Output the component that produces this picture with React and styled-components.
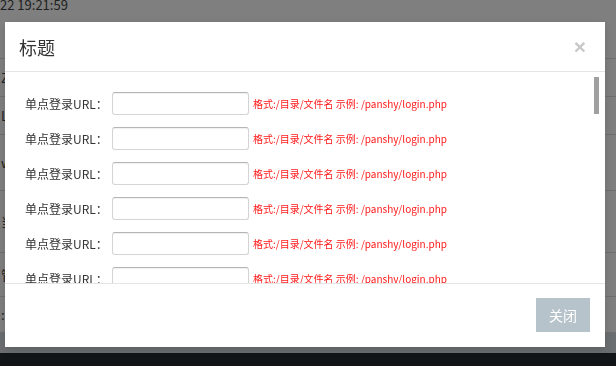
import React from "react";
import styled, { createGlobalStyle } from "styled-components";

const GlobalStyle = createGlobalStyle`
  html, body {
    margin: 0;
    padding: 0;
  }
  body {
    background: #fff;
    height: 366px;
    overflow: hidden;
    font-family: "Noto Sans CJK SC", "Liberation Sans", sans-serif;
  }
  * {
    box-sizing: border-box;
  }
`;

const bgRows = [
  { h: 59, text: "22 19:21:59", top: true },
  { h: 38, text: "Z" },
  { h: 38, text: "L." },
  { h: 56, text: "w" },
  { h: 62, text: "当" },
  { h: 44, text: "管" },
  { h: 36, text: ":" },
];

const rows = [1, 2, 3, 4, 5, 6, 7, 8];

const App = () => {
  return (
    <>
      <GlobalStyle />
      <Page>
        <Table>
          {bgRows.map((r, i) => (
            <BgRow key={i} $h={r.h} $top={r.top}>
              <BgCell $top={r.top}>{r.text}</BgCell>
            </BgRow>
          ))}
        </Table>
        <Band />
        <DarkFooter />
      </Page>

      <Overlay>
        <Modal>
          <Header>
            <Title>标题</Title>
            <Close>×</Close>
          </Header>
          <Body>
            {rows.map((n) => (
              <FormRow key={n}>
                <Label>单点登录URL：</Label>
                <Input type="text" />
                <Hint>格式:/目录/文件名 示例: /panshy/login.php</Hint>
              </FormRow>
            ))}
            <Thumb />
          </Body>
          <Footer>
            <Button>关闭</Button>
          </Footer>
        </Modal>
      </Overlay>
    </>
  );
};

const Page = styled.div`
  display: flex;
  flex-direction: column;
  height: 366px;
`;

const Table = styled.div`
  display: flex;
  flex-direction: column;
`;

const BgRow = styled.div`
  height: ${(p) => p.$h}px;
  border-bottom: 1px solid #dedede;
  display: flex;
  align-items: ${(p) => (p.$top ? "flex-start" : "center")};
`;

const BgCell = styled.div`
  font-size: 13px;
  color: #444;
  margin-top: ${(p) => (p.$top ? "-5px" : "0")};
  padding-left: ${(p) => (p.$top ? "0" : "1px")};
`;

const Band = styled.div`
  height: 20px;
  background: #d7dde1;
`;

const DarkFooter = styled.div`
  flex: 1;
  background: #242a30;
`;

const Overlay = styled.div`
  position: fixed;
  inset: 0;
  background: rgba(0, 0, 0, 0.5);
  padding: 22px 0 0 5px;
`;

const Modal = styled.div`
  width: 600px;
  background: #fff;
  display: flex;
  flex-direction: column;
  box-shadow: 0 3px 9px rgba(0, 0, 0, 0.15);
`;

const Header = styled.div`
  height: 50px;
  padding: 0 19px 0 14px;
  display: flex;
  align-items: center;
  justify-content: space-between;
  border-bottom: 1px solid #e5e5e5;
`;

const Title = styled.h4`
  margin: 0;
  font-size: 18px;
  font-weight: normal;
  color: #333;
`;

const Close = styled.span`
  font-family: "Liberation Sans", sans-serif;
  font-size: 21px;
  font-weight: bold;
  color: #c8c8c8;
  line-height: 1;
`;

const Body = styled.div`
  position: relative;
  height: 211px;
  overflow: hidden;
  padding: 14px 0 0 20px;
`;

const FormRow = styled.div`
  height: 35px;
  display: flex;
  align-items: center;
`;

const Label = styled.label`
  width: 87px;
  font-size: 12px;
  color: #333;
`;

const Input = styled.input`
  width: 137px;
  height: 23px;
  margin: 0 4px 0 0;
  border: 1px solid #d4d4d4;
  border-top-color: #b5b5b5;
  border-radius: 3px;
  box-shadow: inset 0 1px 1px rgba(0, 0, 0, 0.06);
  outline: none;
`;

const Hint = styled.span`
  font-size: 10px;
  color: #ff1a1a;
`;

const Thumb = styled.div`
  position: absolute;
  top: 5px;
  right: 6px;
  width: 5px;
  height: 37px;
  background: #a0a0a0;
`;

const Footer = styled.div`
  border-top: 1px solid #e5e5e5;
  padding: 14px 15px 15px;
  display: flex;
  justify-content: flex-end;
`;

const Button = styled.button`
  width: 54px;
  height: 34px;
  border: none;
  background: #b7c3cb;
  color: #fff;
  font-family: "Noto Sans CJK SC", sans-serif;
  font-size: 14px;
  padding: 0;
`;

export default App;
